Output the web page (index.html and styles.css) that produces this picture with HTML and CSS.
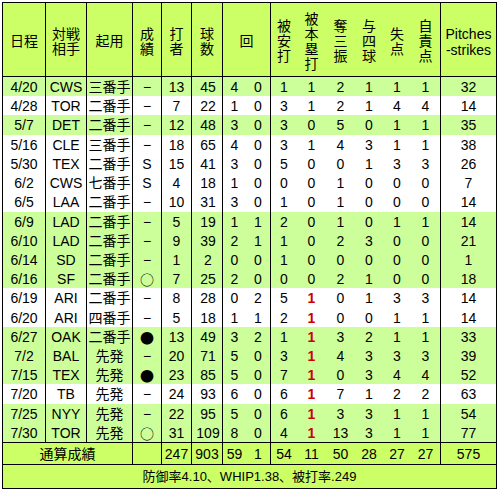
FILE: index.html
```html
<!DOCTYPE html>
<html lang="ja">
<head>
<meta charset="utf-8">
<title>登板成績</title>
<link rel="stylesheet" href="styles.css">
</head>
<body>
<table class="score">
  <colgroup>
    <col class="w-date"><col class="w-opp"><col class="w-role"><col class="w-res">
    <col class="w-bf"><col class="w-np"><col class="w-ip"><col class="w-ipf">
    <col class="w-h"><col class="w-hr"><col class="w-so"><col class="w-bb">
    <col class="w-r"><col class="w-er"><col class="w-ps">
  </colgroup>
  <thead>
    <tr class="head">
      <th>日程</th>
      <th class="bl">対戦<br>相手</th>
      <th class="bl">起用</th>
      <th class="bl">成<br>績</th>
      <th class="bl">打<br>者</th>
      <th class="bl">球<br>数</th>
      <th class="bl" colspan="2">回</th>
      <th class="bl">被<br>安<br>打</th>
      <th>被<br>本<br>塁<br>打</th>
      <th>奪<br>三<br>振</th>
      <th>与<br>四<br>球</th>
      <th>失<br>点</th>
      <th>自<br>責<br>点</th>
      <th class="bl latin">Pitches<br>-strikes</th>
    </tr>
  </thead>
  <tbody class="games">
    <tr class="g"><td>4/20</td><td>CWS</td><td>三番手</td><td>−</td><td>13</td><td>45</td><td>4</td><td>0</td><td>1</td><td>1</td><td>2</td><td>1</td><td>1</td><td>1</td><td>32</td></tr>
    <tr><td>4/28</td><td>TOR</td><td>二番手</td><td>−</td><td>7</td><td>22</td><td>1</td><td>0</td><td>3</td><td>1</td><td>2</td><td>1</td><td>4</td><td>4</td><td>14</td></tr>
    <tr class="g tall"><td>5/7</td><td>DET</td><td>二番手</td><td>−</td><td>12</td><td>48</td><td>3</td><td>0</td><td>3</td><td>0</td><td>5</td><td>0</td><td>1</td><td>1</td><td>35</td></tr>
    <tr><td>5/16</td><td>CLE</td><td>三番手</td><td>−</td><td>18</td><td>65</td><td>4</td><td>0</td><td>3</td><td>1</td><td>4</td><td>3</td><td>1</td><td>1</td><td>38</td></tr>
    <tr><td>5/30</td><td>TEX</td><td>二番手</td><td>S</td><td>15</td><td>41</td><td>3</td><td>0</td><td>5</td><td>0</td><td>0</td><td>1</td><td>3</td><td>3</td><td>26</td></tr>
    <tr><td>6/2</td><td>CWS</td><td>七番手</td><td>S</td><td>4</td><td>18</td><td>1</td><td>0</td><td>0</td><td>0</td><td>1</td><td>0</td><td>0</td><td>0</td><td>7</td></tr>
    <tr class="tall"><td>6/5</td><td>LAA</td><td>二番手</td><td>−</td><td>10</td><td>31</td><td>3</td><td>0</td><td>1</td><td>0</td><td>1</td><td>0</td><td>0</td><td>0</td><td>14</td></tr>
    <tr class="g"><td>6/9</td><td>LAD</td><td>二番手</td><td>−</td><td>5</td><td>19</td><td>1</td><td>1</td><td>2</td><td>0</td><td>1</td><td>0</td><td>1</td><td>1</td><td>14</td></tr>
    <tr class="g"><td>6/10</td><td>LAD</td><td>二番手</td><td>−</td><td>9</td><td>39</td><td>2</td><td>1</td><td>1</td><td>0</td><td>2</td><td>3</td><td>0</td><td>0</td><td>21</td></tr>
    <tr class="g"><td>6/14</td><td>SD</td><td>二番手</td><td>−</td><td>1</td><td>2</td><td>0</td><td>0</td><td>1</td><td>0</td><td>0</td><td>0</td><td>0</td><td>0</td><td>1</td></tr>
    <tr class="g"><td>6/16</td><td>SF</td><td>二番手</td><td class="mark">○</td><td>7</td><td>25</td><td>2</td><td>0</td><td>0</td><td>0</td><td>2</td><td>1</td><td>0</td><td>0</td><td>18</td></tr>
    <tr class="tall"><td>6/19</td><td>ARI</td><td>二番手</td><td>−</td><td>8</td><td>28</td><td>0</td><td>2</td><td>5</td><td><span class="red">1</span></td><td>0</td><td>1</td><td>3</td><td>3</td><td>14</td></tr>
    <tr><td>6/20</td><td>ARI</td><td>四番手</td><td>−</td><td>5</td><td>18</td><td>1</td><td>1</td><td>2</td><td><span class="red">1</span></td><td>0</td><td>0</td><td>1</td><td>1</td><td>14</td></tr>
    <tr class="g"><td>6/27</td><td>OAK</td><td>二番手</td><td class="mark">●</td><td>13</td><td>49</td><td>3</td><td>2</td><td>1</td><td><span class="red">1</span></td><td>3</td><td>2</td><td>1</td><td>1</td><td>33</td></tr>
    <tr class="g"><td>7/2</td><td>BAL</td><td>先発</td><td>−</td><td>20</td><td>71</td><td>5</td><td>0</td><td>3</td><td><span class="red">1</span></td><td>4</td><td>3</td><td>3</td><td>3</td><td>39</td></tr>
    <tr class="g"><td>7/15</td><td>TEX</td><td>先発</td><td class="mark">●</td><td>23</td><td>85</td><td>5</td><td>0</td><td>7</td><td><span class="red">1</span></td><td>0</td><td>3</td><td>4</td><td>4</td><td>52</td></tr>
    <tr class="tall"><td>7/20</td><td>TB</td><td>先発</td><td>−</td><td>24</td><td>93</td><td>6</td><td>0</td><td>6</td><td><span class="red">1</span></td><td>7</td><td>1</td><td>2</td><td>2</td><td>63</td></tr>
    <tr class="g"><td>7/25</td><td>NYY</td><td>先発</td><td>−</td><td>22</td><td>95</td><td>5</td><td>0</td><td>6</td><td><span class="red">1</span></td><td>3</td><td>3</td><td>1</td><td>1</td><td>54</td></tr>
    <tr class="g"><td>7/30</td><td>TOR</td><td>先発</td><td class="mark">○</td><td>31</td><td>109</td><td>8</td><td>0</td><td>4</td><td><span class="red">1</span></td><td>13</td><td>3</td><td>1</td><td>1</td><td>77</td></tr>
  </tbody>
  <tfoot>
    <tr class="total">
      <td colspan="3">通算成績</td>
      <td class="bl"></td>
      <td class="bl">247</td>
      <td class="bl">903</td>
      <td class="bl">59</td>
      <td>1</td>
      <td class="bl">54</td>
      <td>11</td>
      <td>50</td>
      <td>28</td>
      <td>27</td>
      <td>27</td>
      <td class="bl">575</td>
    </tr>
    <tr class="summary">
      <td colspan="15">防御率4.10、WHIP1.38、被打率.249</td>
    </tr>
  </tfoot>
</table>
</body>
</html>
```
FILE: styles.css
```css
html, body {
  margin: 0;
  padding: 0;
  background: #ffffff;
}

body {
  padding: 2px 0 0 2px;
  font-family: "Liberation Sans", "Noto Sans CJK JP", sans-serif;
  font-size: 14px;
  color: #000000;
}

.score {
  table-layout: fixed;
  border-collapse: separate;
  border-spacing: 0;
  border: 1px solid #000000;
  width: 495px;
}

.w-date { width: 42px; }
.w-opp  { width: 41px; }
.w-role { width: 46px; }
.w-res  { width: 29px; }
.w-bf   { width: 30px; }
.w-np   { width: 31px; }
.w-ip   { width: 24px; }
.w-ipf  { width: 24px; }
.w-h    { width: 27px; }
.w-hr   { width: 29px; }
.w-so   { width: 29px; }
.w-bb   { width: 28px; }
.w-r    { width: 28px; }
.w-er   { width: 29px; }
.w-ps   { width: 56px; }

.score th,
.score td {
  box-sizing: border-box;
  padding: 0;
  text-align: center;
  vertical-align: middle;
  font-weight: normal;
  white-space: nowrap;
}

.bl {
  border-left: 1px solid #000000;
}

/* header */
.head th {
  height: 74px;
  padding-top: 4px;
  background: #ccff66;
  border-bottom: 1px solid #000000;
  line-height: 15px;
}

.head .latin {
  line-height: 16px;
}

/* body rows */
.games td {
  height: 19px;
  line-height: 16px;
  background: #ffffff;
}

.games .tall td {
  height: 20px;
}

.games .g td {
  background: #ccff99;
}

.games td:nth-child(2),
.games td:nth-child(3),
.games td:nth-child(4),
.games td:nth-child(5),
.games td:nth-child(6),
.games td:nth-child(7),
.games td:nth-child(9),
.games td:nth-child(15) {
  border-left: 1px solid #000000;
}

.games td:nth-child(6) {
  padding-left: 2px;
}

.mark {
  font-family: "Noto Sans CJK JP", sans-serif;
}

.red {
  color: #cc0000;
  font-weight: bold;
}

/* totals */
.total td {
  height: 22px;
  line-height: 16px;
  background: #ccff66;
  border-top: 1px solid #000000;
}

.summary td {
  height: 24px;
  background: #ccff66;
  border-top: 1px solid #000000;
  font-size: 13px;
  line-height: 16px;
}
```
